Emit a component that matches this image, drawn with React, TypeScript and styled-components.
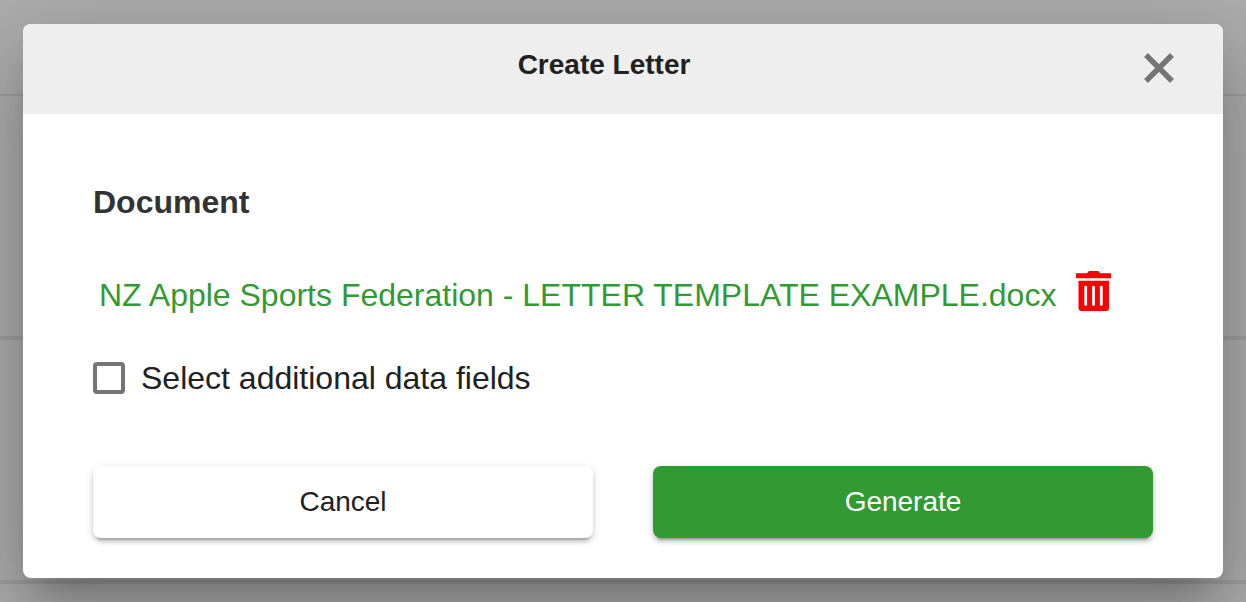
import React from "react";
import styled, { createGlobalStyle } from "styled-components";

const GlobalStyle = createGlobalStyle`
  * { box-sizing: border-box; }
  body {
    margin: 0;
    font-family: "Liberation Sans", Arial, sans-serif;
    color: #212121;
  }
`;

const Page = styled.main`
  position: relative;
  display: flex;
  flex-direction: column;
  min-height: 100vh;
  overflow: hidden;
  background: #fff;
`;

const PageBand = styled.div<{ $height: number; $line: number }>`
  height: ${(p) => p.$height}px;
  border-bottom: ${(p) => p.$line}px solid #ebebeb;
`;

const Overlay = styled.div`
  position: absolute;
  inset: 0;
  padding: 24px 23px;
  background: rgba(0, 0, 0, 0.32);
`;

const Dialog = styled.section`
  background: #fff;
  border-radius: 8px;
  box-shadow:
    0 22px 30px -14px rgba(0, 0, 0, 0.2),
    0 48px 76px 6px rgba(0, 0, 0, 0.14),
    0 18px 92px 16px rgba(0, 0, 0, 0.12);
`;

const Header = styled.header`
  display: flex;
  align-items: flex-start;
  padding: 24px 44px 26px 46px;
  background: #eee;
  border-radius: 8px 8px 0 0;
`;

const Title = styled.h1`
  flex: 1;
  margin: 0;
  font-size: 28px;
  line-height: 34px;
  text-align: center;
`;

const IconButton = styled.button`
  display: flex;
  align-items: center;
  justify-content: center;
  padding: 0;
  border: 0;
  background: none;
  cursor: pointer;
`;

const CloseButton = styled(IconButton)`
  width: 40px;
  height: 40px;
`;

const Body = styled.div`
  padding: 68px 70px 40px;
`;

const Heading = styled.h2`
  margin: 0;
  font-size: 32px;
  line-height: 40px;
  color: #333;
`;

const FileRow = styled.div`
  display: flex;
  align-items: flex-start;
  gap: 20px;
  margin-top: 49px;
  padding-left: 6px;
`;

const FileLink = styled.a`
  padding-top: 4px;
  font-size: 32px;
  line-height: 40px;
  color: #329a32;
  text-decoration: none;
`;

const Option = styled.label`
  display: flex;
  align-items: center;
  gap: 16px;
  margin-top: 43px;
  font-size: 32px;
  line-height: 40px;
`;

const Checkbox = styled.input`
  appearance: none;
  width: 32px;
  height: 32px;
  margin: 0;
  border: 4px solid #757575;
  border-radius: 4px;
  background: #fff;

  &:checked {
    background: #329a32;
  }
`;

const Actions = styled.div`
  display: grid;
  grid-template-columns: 1fr 1fr;
  gap: 60px;
  margin-top: 68px;
`;

const ActionButton = styled.button<{ $primary?: boolean }>`
  height: 72px;
  padding: 0 32px;
  border: 0;
  border-radius: 8px;
  background: ${(p) => (p.$primary ? "#329a32" : "#fff")};
  color: ${(p) => (p.$primary ? "#fff" : "#212121")};
  font-family: inherit;
  font-size: 28px;
  line-height: 32px;
  cursor: pointer;
  box-shadow:
    0 6px 2px -4px rgba(0, 0, 0, 0.2),
    0 4px 4px 0 rgba(0, 0, 0, 0.14),
    0 2px 10px 0 rgba(0, 0, 0, 0.12);
`;

const CloseIcon = () => (
  <svg width="30" height="30" viewBox="0 0 30 30" aria-hidden="true">
    <path d="M2 2 28 28M28 2 2 28" stroke="#757575" strokeWidth="5.4" />
  </svg>
);

const TrashIcon = () => (
  <svg width="36" height="40" viewBox="0 0 36 40" aria-hidden="true">
    <path
      fill="#f00"
      fillRule="evenodd"
      d="M0 2.3H11L12.4.5Q12.8 0 13.4 0H21.8Q22.4 0 22.8.5L24.2 2.3H35V7.2H0ZM2.5 9.8H33V37Q33 40 30 40H5.5Q2.5 40 2.5 37ZM9.7 14.8Q8.3 14.8 8.3 16.2V33.6Q8.3 35 9.7 35T11.1 33.6V16.2Q11.1 14.8 9.7 14.8ZM17.5 14.8Q16.1 14.8 16.1 16.2V33.6Q16.1 35 17.5 35T18.9 33.6V16.2Q18.9 14.8 17.5 14.8ZM25.3 14.8Q23.9 14.8 23.9 16.2V33.6Q23.9 35 25.3 35T26.7 33.6V16.2Q26.7 14.8 25.3 14.8Z"
    />
  </svg>
);

export default function App() {
  return (
    <>
      <GlobalStyle />
      <Page>
        <PageBand $height={96} $line={2} />
        <PageBand $height={244} $line={4} />
        <PageBand $height={244} $line={4} />
        <Overlay>
          <Dialog role="dialog" aria-modal="true" aria-labelledby="dialog-title">
            <Header>
              <Title id="dialog-title">Create Letter</Title>
              <CloseButton type="button" aria-label="Close">
                <CloseIcon />
              </CloseButton>
            </Header>
            <Body>
              <Heading>Document</Heading>
              <FileRow>
                <FileLink href="#document">
                  NZ Apple Sports Federation - LETTER TEMPLATE EXAMPLE.docx
                </FileLink>
                <IconButton type="button" aria-label="Remove document">
                  <TrashIcon />
                </IconButton>
              </FileRow>
              <Option>
                <Checkbox type="checkbox" />
                Select additional data fields
              </Option>
              <Actions>
                <ActionButton type="button">Cancel</ActionButton>
                <ActionButton type="button" $primary>
                  Generate
                </ActionButton>
              </Actions>
            </Body>
          </Dialog>
        </Overlay>
      </Page>
    </>
  );
}
